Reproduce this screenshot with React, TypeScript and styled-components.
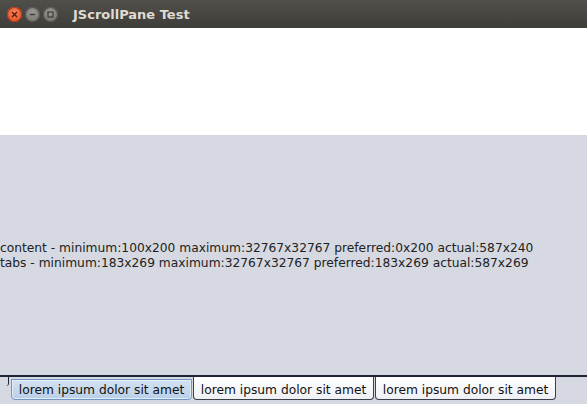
import React from "react";
import styled, { createGlobalStyle } from "styled-components";

const Global = createGlobalStyle`
  html, body {
    margin: 0;
    padding: 0;
    width: 587px;
    height: 404px;
    overflow: hidden;
    background: #ffffff;
  }
  body {
    font-family: "DejaVu Sans", "Liberation Sans", sans-serif;
  }
`;

const Window = styled.div`
  width: 587px;
  height: 404px;
  display: flex;
  flex-direction: column;
`;

const TitleBar = styled.div`
  height: 28px;
  flex: 0 0 28px;
  display: flex;
  align-items: center;
  padding-left: 7px;
  background: linear-gradient(#504f4a, #3e3d39);
  box-sizing: border-box;
`;

const Controls = styled.div`
  display: flex;
  gap: 3px;
  align-items: center;
`;

const CtrlButton = styled.div<{ $close?: boolean }>`
  width: 15px;
  height: 15px;
  border-radius: 50%;
  display: flex;
  align-items: center;
  justify-content: center;
  background: ${(p) =>
    p.$close
      ? "radial-gradient(circle at 50% 35%, #f6845a, #e0461b)"
      : "radial-gradient(circle at 50% 35%, #9a9992, #6d6c67)"};
  box-shadow: inset 0 0 0 1px ${(p) => (p.$close ? "#b33a14" : "#55544f")};
`;

const Title = styled.div`
  margin-left: 15px;
  color: #dfdbd2;
  font-family: "DejaVu Sans", "Liberation Sans", sans-serif;
  font-weight: bold;
  font-size: 13px;
`;

const TopArea = styled.div`
  height: 107px;
  flex: 0 0 107px;
  background: #ffffff;
`;

const Tabs = styled.div`
  flex: 1;
  display: flex;
  flex-direction: column;
  background: #d6d9e1;
`;

const Content = styled.div`
  flex: 0 0 240px;
  display: flex;
  flex-direction: column;
  justify-content: center;
  padding-top: 2px;
  box-sizing: border-box;
  color: #222222;
  font-size: 12.25px;
  line-height: 15px;
`;

const Line = styled.div`
  white-space: nowrap;
`;

const TabStrip = styled.div`
  flex: 1;
  display: flex;
  align-items: flex-start;
  border-top: 2px solid #1d2433;
  box-sizing: border-box;
`;

const Edge = styled.div`
  width: 8px;
  height: 9px;
  border-right: 1px solid #1d2433;
  border-bottom-right-radius: 3px;
  margin-right: 2px;
`;

const Tab = styled.div<{ $selected?: boolean }>`
  height: ${(p) => (p.$selected ? "21px" : "23px")};
  margin-top: ${(p) => (p.$selected ? "2px" : "0")};
  padding: ${(p) => (p.$selected ? "1px 7px 0" : "3px 7px 0")};
  width: 181px;
  box-sizing: border-box;
  display: flex;
  align-items: center;
  justify-content: center;
  font-size: 12.25px;
  color: #111111;
  white-space: nowrap;
  border: 1px solid ${(p) => (p.$selected ? "#6f97c4" : "#3a3f4a")};
  border-top: ${(p) => (p.$selected ? "1px solid #6f97c4" : "none")};
  border-radius: 0 0 4px 4px;
  background: ${(p) =>
    p.$selected
      ? "linear-gradient(#d4e2f1, #b9cfe8)"
      : "linear-gradient(#ffffff, #eef0f4)"};
  box-shadow: ${(p) => (p.$selected ? "inset 0 0 0 1px #e4edf7" : "none")};
  margin-right: 1px;
`;

export default function App() {
  const tabs = ["lorem ipsum dolor sit amet", "lorem ipsum dolor sit amet", "lorem ipsum dolor sit amet"];
  return (
    <Window>
      <Global />
      <TitleBar>
        <Controls>
          <CtrlButton $close>
            <svg width="7" height="7" viewBox="0 0 7 7">
              <path d="M1 1L6 6M6 1L1 6" stroke="#5a1a06" strokeWidth="1.4" />
            </svg>
          </CtrlButton>
          <CtrlButton>
            <svg width="7" height="7" viewBox="0 0 7 7">
              <path d="M1 3.5H6" stroke="#3a3935" strokeWidth="1.4" />
            </svg>
          </CtrlButton>
          <CtrlButton>
            <svg width="7" height="7" viewBox="0 0 7 7">
              <rect x="1" y="1" width="5" height="5" fill="none" stroke="#3a3935" strokeWidth="1.2" />
            </svg>
          </CtrlButton>
        </Controls>
        <Title>JScrollPane Test</Title>
      </TitleBar>
      <TopArea />
      <Tabs>
        <Content>
          <Line>content - minimum:100x200 maximum:32767x32767 preferred:0x200 actual:587x240</Line>
          <Line>tabs - minimum:183x269 maximum:32767x32767 preferred:183x269 actual:587x269</Line>
        </Content>
        <TabStrip>
          <Edge />
          {tabs.map((t, i) => (
            <Tab key={i} $selected={i === 0}>
              {t}
            </Tab>
          ))}
        </TabStrip>
      </Tabs>
    </Window>
  );
}
